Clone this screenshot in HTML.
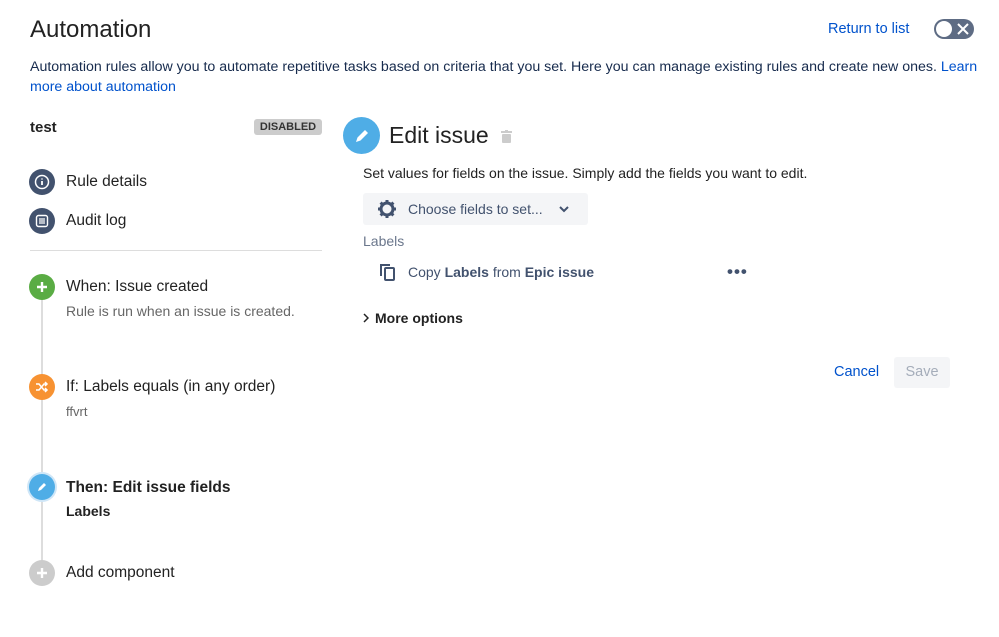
<!DOCTYPE html>
<html><head><style>
body{margin:0;width:999px;height:637px;background:#fff;font-family:"Liberation Sans",sans-serif;color:#172b4d;position:relative;overflow:hidden}
.a{position:absolute;white-space:nowrap}
.c{position:absolute;width:26px;height:26px;border-radius:50%;display:flex;align-items:center;justify-content:center}
.t{font-size:15.5px;color:#222}
</style></head><body>
<div class="a" style="left:30px;top:16px;font-size:24px;color:#222">Automation</div>
<div class="a" style="left:828px;top:21px;font-size:14.5px;color:#0052cc">Return to list</div>
<div class="a" style="left:934px;top:19px;width:40px;height:20px;border-radius:10px;background:#5e6c84">
 <div style="position:absolute;left:2px;top:2px;width:16px;height:16px;border-radius:50%;background:#fff"></div>
 <svg style="position:absolute;left:23px;top:4px" width="12" height="12" viewBox="0 0 12 12"><path d="M1 1L11 11M11 1L1 11" stroke="#fff" stroke-width="2"/></svg>
</div>
<div class="a" style="left:30px;top:57px;font-size:14.2px;color:#172b4d;line-height:20px;white-space:normal;width:955px">Automation rules allow you to automate repetitive tasks based on criteria that you set. Here you can manage existing rules and create new ones. <span style="color:#0052cc">Learn more about automation</span></div>

<div class="a" style="left:30px;top:119px;font-size:15px;font-weight:bold;color:#222">test</div>
<div class="a" style="left:254px;top:119px;width:68px;height:16px;background:#ccc;border-radius:3px;font-size:11px;font-weight:bold;color:#333;text-align:center;line-height:16px">DISABLED</div>

<div class="c" style="left:29px;top:169px;background:#42526e"><svg width="16" height="16" viewBox="0 0 16 16"><circle cx="8" cy="8" r="6.5" fill="none" stroke="#fff" stroke-width="1.5"/><path d="M8 7v4M8 4.5v1" stroke="#fff" stroke-width="1.8"/></svg></div>
<div class="a t" style="left:66px;top:173px">Rule details</div>
<div class="c" style="left:29px;top:208px;background:#42526e"><svg width="16" height="16" viewBox="0 0 16 16"><rect x="2.5" y="2.5" width="11" height="11" rx="2" fill="none" stroke="#fff" stroke-width="1.4"/><path d="M5 6h6M5 8h6M5 10h6" stroke="#fff" stroke-width="1.2"/></svg></div>
<div class="a t" style="left:66px;top:212px">Audit log</div>
<div class="a" style="left:30px;top:250px;width:292px;height:1px;background:#ddd"></div>

<div class="a" style="left:41px;top:290px;width:2px;height:283px;background:#ddd"></div>
<div class="c" style="left:29px;top:274px;background:#5aac44"><svg width="12" height="12"><path d="M6 1v10M1 6h10" stroke="#fff" stroke-width="2.4"/></svg></div>
<div class="a t" style="left:66px;top:278px">When: Issue created</div>
<div class="a" style="left:66px;top:303px;font-size:14px;color:#666">Rule is run when an issue is created.</div>

<div class="c" style="left:29px;top:374px;background:#f79232"><svg width="14" height="12" viewBox="0 0 14 12"><path d="M1 3h3l5 6h3M1 9h3l5-6h3M10 1l2 2-2 2M10 7l2 2-2 2" stroke="#fff" stroke-width="1.5" fill="none"/></svg></div>
<div class="a t" style="left:66px;top:378px">If: Labels equals (in any order)</div>
<div class="a" style="left:66px;top:404px;font-size:13px;color:#666">ffvrt</div>

<div class="c" style="left:29px;top:474px;background:#4fade6;box-shadow:0 0 0 2px #cfe6f7"><svg width="12" height="12" viewBox="0 0 12 12"><path d="M2 10l1-3 5-5 2 2-5 5z" fill="#fff"/></svg></div>
<div class="a" style="left:66px;top:479px;font-size:15.5px;font-weight:bold;color:#222">Then: Edit issue fields</div>
<div class="a" style="left:66px;top:503px;font-size:14px;font-weight:bold;color:#222">Labels</div>

<div class="c" style="left:29px;top:560px;background:#ccc"><svg width="12" height="12"><path d="M6 1v10M1 6h10" stroke="#fff" stroke-width="2.4"/></svg></div>
<div class="a t" style="left:66px;top:564px">Add component</div>

<div class="c" style="left:343px;top:117px;width:37px;height:37px;background:#4fade6"><svg width="18" height="18" viewBox="0 0 12 12"><path d="M2 10l1-3 5-5 2 2-5 5z" fill="#fff"/></svg></div>
<div class="a" style="left:389px;top:122px;font-size:23px;color:#222">Edit issue</div>
<svg class="a" style="left:501px;top:130px" width="11" height="13" viewBox="0 0 11 13"><rect x="0" y="1" width="11" height="2" fill="#ccc"/><rect x="4" y="0" width="3" height="2" fill="#ccc"/><rect x="1" y="4" width="9" height="9" rx="1" fill="#ccc"/></svg>
<div class="a" style="left:363px;top:165px;font-size:14px;color:#222">Set values for fields on the issue. Simply add the fields you want to edit.</div>
<div class="a" style="left:363px;top:193px;width:225px;height:32px;background:#f4f5f7;border-radius:3px"></div>
<svg class="a" style="left:377px;top:199px" width="20" height="20" viewBox="0 0 20 20"><circle cx="10" cy="10" r="6" fill="none" stroke="#42526e" stroke-width="3"/><path d="M10 1v4M10 15v4M1 10h4M15 10h4M3.6 3.6l2.8 2.8M13.6 13.6l2.8 2.8M3.6 16.4l2.8-2.8M13.6 6.4l2.8-2.8" stroke="#42526e" stroke-width="3"/></svg>
<div class="a" style="left:408px;top:201px;font-size:14px;color:#42526e">Choose fields to set...</div>
<svg class="a" style="left:559px;top:205px" width="10" height="8"><path d="M1 2l4 4 4-4" stroke="#42526e" stroke-width="2" fill="none"/></svg>
<div class="a" style="left:363px;top:233px;font-size:14px;color:#6b778c">Labels</div>
<svg class="a" style="left:379px;top:263px" width="18" height="19" viewBox="0 0 18 19"><path d="M2 13V2h9" stroke="#42526e" stroke-width="2" fill="none"/><rect x="6" y="5" width="9" height="12" rx="1" fill="none" stroke="#42526e" stroke-width="2"/></svg>
<div class="a" style="left:408px;top:264px;font-size:14px;color:#42526e">Copy <b>Labels</b> from <b>Epic issue</b></div>
<div class="a" style="left:727px;top:262px;font-size:17px;font-weight:bold;color:#42526e;letter-spacing:1px">•••</div>
<svg class="a" style="left:363px;top:313px" width="6" height="10"><path d="M1 1l4 4-4 4" stroke="#222" stroke-width="1.5" fill="none"/></svg>
<div class="a" style="left:375px;top:310px;font-size:14px;font-weight:bold;color:#222">More options</div>
<div class="a" style="left:834px;top:364px;font-size:14.5px;color:#0052cc">Cancel</div>
<div class="a" style="left:894px;top:357px;width:56px;height:31px;background:#f4f5f7;border-radius:3px;font-size:14.5px;color:#a5adba;text-align:center;line-height:31px">Save</div>
</body></html>
